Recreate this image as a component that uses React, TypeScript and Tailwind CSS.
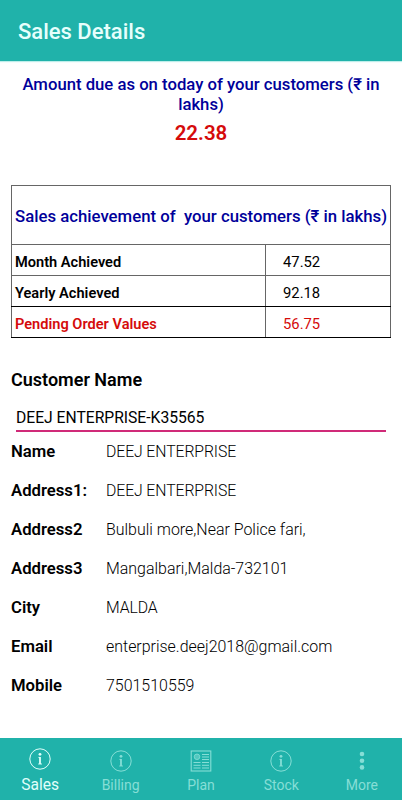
import React, { useState } from "react";

//customer details rows
const details = [
  { label: "Name", value: "DEEJ ENTERPRISE" },
  { label: "Address1:", value: "DEEJ ENTERPRISE" },
  { label: "Address2", value: "Bulbuli more,Near Police fari," },
  { label: "Address3", value: "Mangalbari,Malda-732101" },
  { label: "City", value: "MALDA" },
  { label: "Email", value: "enterprise.deej2018@gmail.com" },
  { label: "Mobile", value: "7501510559" },
];

const InfoIcon = () => (
  <svg width="22" height="22" viewBox="0 0 22 22" fill="none" stroke="currentColor">
    <circle cx="11" cy="11" r="10.2" strokeWidth="1" />
    <circle cx="11" cy="6.3" r="1.4" fill="currentColor" stroke="none" />
    <path d="M11 9v7" strokeWidth="1.8" />
    <path d="M9.4 9.4H11M9.2 16h3.8" strokeWidth="0.9" />
  </svg>
);

const PlanIcon = () => (
  <svg width="22" height="22" viewBox="0 0 22 22" fill="none" stroke="currentColor">
    <rect x="1.2" y="1" width="19.6" height="20" strokeWidth="1.1" />
    <circle cx="7" cy="6.8" r="2.8" fill="currentColor" fillOpacity="0.5" strokeWidth="0.8" />
    <path
      d="M12 4.5h7M12 7h7M12 9.5h7M3.5 12.5h7M12 12.5h7M3.5 15.3h7M12 15.3h7M3.5 18h7M12 18h7"
      strokeWidth="1"
    />
  </svg>
);

const MoreIcon = () => (
  <svg width="22" height="22" viewBox="0 0 22 22" fill="currentColor">
    <circle cx="11" cy="4" r="2.3" />
    <circle cx="11" cy="10.7" r="2.3" />
    <circle cx="11" cy="17.4" r="2.3" />
  </svg>
);

const tabs = [
  { name: "Sales", icon: InfoIcon },
  { name: "Billing", icon: InfoIcon },
  { name: "Plan", icon: PlanIcon },
  { name: "Stock", icon: InfoIcon },
  { name: "More", icon: MoreIcon },
];

//sales achievement table
const SalesTable = () => {
  return (
    <table className="ml-[11px] mt-[40px] w-[380px] table-fixed border-collapse border border-[#555] text-[14.8px]">
      <colgroup>
        <col className="w-[254px]" />
        <col />
      </colgroup>
      <tbody>
        <tr className="h-[59px]">
          <td
            colSpan={2}
            className="whitespace-pre border border-[#666] p-0 pl-[3px] pt-[3px] text-[16.75px] font-medium text-[#00009a]"
          >
            Sales achievement of  your customers (₹ in lakhs)
          </td>
        </tr>
        <tr className="h-[31px]">
          <td className="border border-[#666] p-0 pl-[3px] pt-[5px] text-[14.6px] font-semibold">Month Achieved</td>
          <td className="border border-[#666] p-0 pl-[17px] pt-[4px]">47.52</td>
        </tr>
        <tr className="h-[31px]">
          <td className="border border-[#666] border-b-black p-0 pl-[3px] pt-[5px] text-[14.6px] font-semibold">
            Yearly Achieved
          </td>
          <td className="border border-[#666] border-b-black p-0 pl-[17px] pt-[4px]">92.18</td>
        </tr>
        <tr className="h-[31px] text-[#d50b0b]">
          <td className="border border-[#666] border-b-black p-0 pl-[3px] pt-[5px] text-[14.6px] font-semibold">
            Pending Order Values
          </td>
          <td className="border border-[#666] border-b-black p-0 pl-[17px] pt-[4px]">56.75</td>
        </tr>
      </tbody>
    </table>
  );
};

const App = () => {
  const [activeTab, setActiveTab] = useState("Sales");

  return (
    <div className="flex h-[800px] w-[402px] flex-col overflow-hidden bg-white font-[Roboto,sans-serif] text-black">
      {/* header */}
      <header className="flex h-[61px] shrink-0 items-center bg-[#20b2aa] pl-[18px] pt-[1px] text-[22px] font-medium text-[#e6fffc] shadow-[0_1px_1px_#bdeeea]">
        Sales Details
      </header>

      <main className="flex-1">
        {/* amount due */}
        <div className="pt-[14px] text-center">
          <p className="text-[16.7px] font-medium leading-[20px] text-[#00009a]">
            Amount due as on today of your customers (₹ in
            <br />
            lakhs)
          </p>
          <p className="mt-[6px] text-[20.5px] font-semibold leading-[24px] text-[#d50b0b]">22.38</p>
        </div>

        <SalesTable />

        {/* customer picker */}
        <div className="mt-[31px] pl-[11px] text-[18px] font-semibold leading-[22px]">Customer Name</div>
        <div className="ml-[16px] mt-[14px] h-[27px] w-[370px] border-b-2 border-[#d02a78] pt-[1px] text-[15.7px] leading-[23px] tracking-[-0.02px]">
          DEEJ ENTERPRISE-K35565
        </div>

        {/* details */}
        <div>
          {details.map((item) => (
            <div key={item.label} className="flex h-[39px] items-center pl-[11px]">
              <div className="w-[95px] pt-[1px] text-[16.7px] font-semibold">{item.label}</div>
              <div className={/[a-z0-9]/.test(item.value) ? "text-[15.95px] font-light" : "text-[15.8px] font-light tracking-[-0.1px]"}>
                {item.value}
              </div>
            </div>
          ))}
        </div>
      </main>

      {/* bottom tabs */}
      <nav className="grid h-[62px] shrink-0 grid-cols-5 bg-[#20b2aa]">
        {tabs.map(({ name, icon: Icon }) => (
          <button
            key={name}
            onClick={() => setActiveTab(name)}
            className={
              activeTab === name
                ? "flex flex-col items-center pt-[10px] text-[#e0fffb]"
                : "flex flex-col items-center pt-[12px] text-[#86ded6]"
            }
          >
            <Icon />
            <span className={activeTab === name ? "mt-[5px] text-[15.6px] leading-[20px]" : "mt-[3px] text-[14px] leading-[20px]"}>
              {name}
            </span>
          </button>
        ))}
      </nav>
    </div>
  );
};

export default App;
